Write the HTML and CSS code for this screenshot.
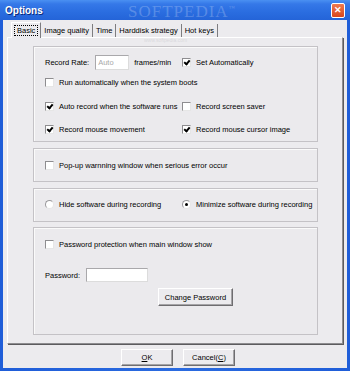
FILE: index.html
```html
<!DOCTYPE html>
<html lang="en">
<head>
    <meta charset="UTF-8">
    <title>Options</title>
    <link rel="stylesheet" href="styles.css">
</head>
<body>
    <div class="window">
        <div class="titlebar">
            <span class="title">Options</span>
            <span class="close">&#x2715;</span>
        </div>
        <div class="watermark">SOFTPEDIA<sup>&trade;</sup><small>www.softpedia.com</small></div>
        <div class="body">
            <div class="tabs">
                <div class="tab active"><span class="focus">Basic</span></div>
                <div class="tab">Image quality</div>
                <div class="tab">Time</div>
                <div class="tab">Harddisk strategy</div>
                <div class="tab">Hot keys</div>
            </div>
            <div class="panel">
                <div class="group g1">
                    <div class="row r1">
                        <div class="col">
                            <span class="label">Record Rate:</span>
                            <span class="input disabled">Auto</span>
                            <span class="unit">frames/min</span>
                        </div>
                        <label class="col right"><span class="check on"></span>Set Automatically</label>
                    </div>
                    <div class="row r2">
                        <label class="col"><span class="check"></span>Run automatically when the system boots</label>
                    </div>
                    <div class="row r3">
                        <label class="col"><span class="check on"></span>Auto record when the software runs</label>
                        <label class="col right"><span class="check"></span>Record screen saver</label>
                    </div>
                    <div class="row r4">
                        <label class="col"><span class="check on"></span>Record mouse movement</label>
                        <label class="col right"><span class="check on"></span>Record mouse cursor image</label>
                    </div>
                </div>
                <div class="group g2">
                    <div class="row">
                        <label class="col"><span class="check"></span>Pop-up warnning window when serious error occur</label>
                    </div>
                </div>
                <div class="group g3">
                    <div class="row">
                        <label class="col"><span class="radio"></span>Hide software during recording</label>
                        <label class="col right"><span class="radio on"></span>Minimize software during recording</label>
                    </div>
                </div>
                <div class="group g4">
                    <div class="row">
                        <label class="col"><span class="check"></span>Password protection when main window show</label>
                    </div>
                    <div class="row pw">
                        <span class="label">Password:</span>
                        <span class="input wide"></span>
                    </div>
                    <div class="row btnrow">
                        <button class="btn change">Change Password</button>
                    </div>
                </div>
            </div>
            <div class="footer">
                <button class="btn"><u>O</u>K</button>
                <button class="btn">Cancel(<u>C</u>)</button>
            </div>
        </div>
    </div>
</body>
</html>
```

FILE: styles.css
```css
body {
    margin: 0;
    font-family: "Liberation Sans", Arial, sans-serif;
    font-size: 7.5px;
    color: #000;
    background: #2a62d4;
}
.window {
    position: relative;
    width: 350px;
    height: 371px;
    box-sizing: border-box;
    background: linear-gradient(to right, #1f5dd8, #2b6be0 50%, #1f5dd8);
    padding: 0 3px 3px 3px;
    display: flex;
    flex-direction: column;
}
.titlebar {
    height: 20px;
    margin: 0 -3px;
    padding: 0 5px 0 5px;
    display: flex;
    align-items: center;
    justify-content: space-between;
    background: linear-gradient(to bottom, #4a90f2 0%, #3578e8 20%, #2a6de0 60%, #2464d8 100%);
}
.title {
    color: #fff;
    font-weight: bold;
    font-size: 10px;
    text-shadow: 1px 1px 0 #0a2a7a;
}
.close {
    width: 12px;
    height: 13px;
    border: 1px solid #fff;
    border-radius: 2px;
    background: linear-gradient(to bottom, #ef7a50, #d8461c);
    color: #fff;
    font-size: 9px;
    font-weight: bold;
    display: flex;
    align-items: center;
    justify-content: center;
}
.watermark {
    position: absolute;
    left: 128px;
    top: 2px;
    color: rgba(255, 255, 255, 0.22);
    font-family: "Liberation Serif", serif;
    font-size: 17px;
    letter-spacing: 1px;
    pointer-events: none;
}
.watermark sup {
    font-size: 6px;
}
.watermark small {
    position: absolute;
    left: 16px;
    top: 35px;
    font-family: "Liberation Sans", sans-serif;
    font-size: 5px;
    letter-spacing: 0;
    color: rgba(150, 150, 160, 0.25);
}
.body {
    flex: 1;
    background: #ecebee;
    display: flex;
    flex-direction: column;
    padding: 0 4px;
}
.tabs {
    display: flex;
    height: 16px;
    margin-top: 1px;
    padding-left: 4px;
    align-items: flex-end;
}
.tab {
    height: 13px;
    padding: 0 3px;
    display: flex;
    align-items: center;
    border-right: 1px solid #7e7d80;
    white-space: nowrap;
}
.tab.active {
    height: 15px;
    padding: 0 3px;
    border-top: 1px solid #fff;
    border-left: 1px solid #fff;
    margin-bottom: -1px;
    background: #ecebee;
    position: relative;
    z-index: 1;
}
.focus {
    outline: 1px dotted #000;
    padding: 0 2px;
}
.panel {
    height: 307px;
    box-sizing: border-box;
    border-top: 1px solid #fff;
    border-left: 1px solid #fff;
    border-right: 1px solid #8e8d90;
    border-bottom: 1px solid #8e8d90;
    box-shadow: 1px 1px 0 #5c5b5e;
    padding: 8px 0 0 25px;
    display: flex;
    flex-direction: column;
}
.group {
    width: 285px;
    box-sizing: border-box;
    border: 1px solid #c4c2c6;
    box-shadow: inset 1px 1px 0 #fafafa;
    background: #ebeaed;
    padding-left: 11px;
}
.g1 { height: 96px; padding-top: 7px; }
.g2 { height: 34px; margin-top: 6px; padding-top: 8px; }
.g3 { height: 34px; margin-top: 6px; padding-top: 7px; }
.g4 { height: 108px; margin-top: 5px; padding-top: 8px; }
.row {
    display: flex;
    align-items: center;
    height: 16px;
}
.r2 { margin-top: 4px; }
.r3 { margin-top: 8px; }
.r4 { margin-top: 7px; }
.col {
    display: flex;
    align-items: center;
    width: 137px;
    white-space: nowrap;
}
.col.right {
    width: auto;
}
.label {
    margin-right: 5px;
}
.input {
    box-sizing: border-box;
    height: 15px;
    background: #fff;
    border: 1px solid #a9a8ab;
    border-right-color: #dcdcdc;
    border-bottom-color: #dcdcdc;
    display: inline-flex;
    align-items: center;
    padding-left: 2px;
}
.input.disabled {
    width: 34px;
    color: #a8a8a8;
    margin-left: 1px;
}
.unit {
    margin-left: 5px;
}
.pw {
    margin-top: 15px;
}
.pw .label {
    margin-right: 6px;
}
.input.wide {
    width: 62px;
    height: 14px;
}
.btnrow {
    margin-top: 5px;
    height: 18px;
    padding-left: 113px;
}
.check {
    width: 9px;
    height: 9px;
    box-sizing: border-box;
    background: #fff;
    border: 1px solid #8e8d90;
    border-right-color: #e6e6e6;
    border-bottom-color: #e6e6e6;
    margin-right: 5px;
    position: relative;
    flex: none;
}
.check.on::after {
    content: "";
    position: absolute;
    left: 2px;
    top: 0px;
    width: 2px;
    height: 4px;
    border-right: 2px solid #000;
    border-bottom: 2px solid #000;
    transform: rotate(40deg);
}
.radio {
    width: 9px;
    height: 9px;
    box-sizing: border-box;
    border-radius: 50%;
    background: #fff;
    border: 1px solid #9a999c;
    border-right-color: #e6e6e6;
    border-bottom-color: #e6e6e6;
    margin-right: 5px;
    position: relative;
    flex: none;
}
.radio.on::after {
    content: "";
    position: absolute;
    left: 2px;
    top: 2px;
    width: 3px;
    height: 3px;
    border-radius: 50%;
    background: #000;
}
.btn {
    font-family: "Liberation Sans", Arial, sans-serif;
    font-size: 7.5px;
    background: #ecebee;
    color: #000;
    border: 1px solid #fff;
    border-right-color: #6e6d70;
    border-bottom-color: #6e6d70;
    box-shadow: inset -1px -1px 0 #a5a4a7;
    padding: 0;
    margin: 0;
}
.btn.change {
    width: 75px;
    height: 18px;
}
.footer {
    display: flex;
    gap: 10px;
    padding: 5px 0 0 114px;
}
.footer .btn {
    width: 52px;
    height: 17px;
}
```
